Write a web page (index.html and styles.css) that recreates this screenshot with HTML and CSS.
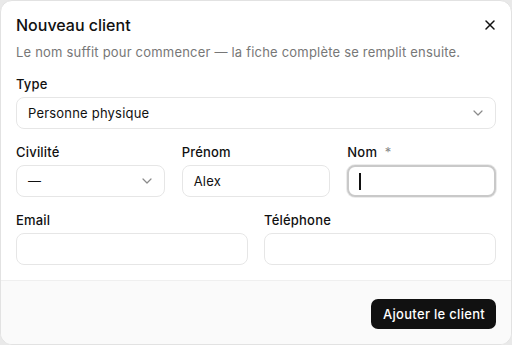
FILE: index.html
```html
<!DOCTYPE html>
<html lang="fr">
<head>
    <meta charset="UTF-8">
    <meta name="viewport" content="width=device-width, initial-scale=1.0">
    <title>Nouveau client</title>
    <link rel="stylesheet" href="styles.css">
</head>
<body>
    <div class="dialog">
        <div class="dialog-body">
            <div class="dialog-header">
                <h2 class="title">Nouveau client</h2>
                <button class="close" aria-label="Fermer">
                    <svg width="12" height="12" viewBox="0 0 12 12"><path d="M2 2L10 10M10 2L2 10" stroke="#111" stroke-width="1.5" stroke-linecap="round"/></svg>
                </button>
            </div>
            <p class="subtitle">Le nom suffit pour commencer — la fiche complète se remplit ensuite.</p>

            <div class="form">
                <div class="field">
                    <label>Type</label>
                    <div class="control select">
                        <span>Personne physique</span>
                        <svg class="chevron" width="10" height="6" viewBox="0 0 10 6"><path d="M1 1L5 5L9 1" fill="none" stroke="#8a8a8a" stroke-width="1.2" stroke-linecap="round" stroke-linejoin="round"/></svg>
                    </div>
                </div>

                <div class="row three">
                    <div class="field">
                        <label>Civilité</label>
                        <div class="control select">
                            <span>—</span>
                            <svg class="chevron" width="10" height="6" viewBox="0 0 10 6"><path d="M1 1L5 5L9 1" fill="none" stroke="#8a8a8a" stroke-width="1.2" stroke-linecap="round" stroke-linejoin="round"/></svg>
                        </div>
                    </div>
                    <div class="field">
                        <label>Prénom</label>
                        <div class="control"><span>Alex</span></div>
                    </div>
                    <div class="field">
                        <label>Nom <span class="req">*</span></label>
                        <div class="control focused"><span class="caret"></span></div>
                    </div>
                </div>

                <div class="row two">
                    <div class="field">
                        <label>Email</label>
                        <div class="control"></div>
                    </div>
                    <div class="field">
                        <label>Téléphone</label>
                        <div class="control"></div>
                    </div>
                </div>
            </div>
        </div>
        <div class="dialog-footer">
            <button class="primary">Ajouter le client</button>
        </div>
    </div>
</body>
</html>
```
FILE: styles.css
```css
* {
    box-sizing: border-box;
}

body {
    margin: 0;
    background-color: #e9e9e9;
    font-family: Inter, "Noto Sans", sans-serif;
    color: #111;
}

.dialog {
    width: 512px;
    height: 345px;
    background-color: #fff;
    border: 1px solid #e2e2e2;
    border-radius: 12px;
    overflow: hidden;
    display: flex;
    flex-direction: column;
}

.dialog-body {
    padding: 12px 15px 15px;
}

.dialog-header {
    display: flex;
    justify-content: space-between;
    align-items: center;
}

.title {
    margin: 0;
    font-size: 16px;
    line-height: 24px;
    font-weight: 500;
}

.close {
    border: none;
    background: none;
    padding: 0;
    width: 20px;
    height: 20px;
    display: flex;
    align-items: center;
    justify-content: center;
    margin-right: -4px;
}

.subtitle {
    margin: 5px 0 0;
    font-size: 13px;
    line-height: 20px;
    color: #777;
    letter-spacing: 0.2px;
}

.form {
    margin-top: 12px;
    display: flex;
    flex-direction: column;
    gap: 13px;
}

.field {
    display: flex;
    flex-direction: column;
    gap: 3px;
}

.field label {
    font-size: 13px;
    line-height: 20px;
    font-weight: 500;
    letter-spacing: 0.2px;
}

.req {
    color: #888;
    font-weight: 400;
    margin-left: 4px;
}

.row {
    display: grid;
    gap: 16px;
}

.row.three {
    grid-template-columns: repeat(3, 1fr);
    gap: 17px;
}

.row.two {
    grid-template-columns: repeat(2, 1fr);
}

.control {
    height: 32px;
    border: 1px solid #e6e6e6;
    border-radius: 8px;
    background-color: #fff;
    display: flex;
    align-items: center;
    justify-content: space-between;
    padding: 0 12px 0 11px;
    font-size: 13px;
    letter-spacing: 0.2px;
}

.control.focused {
    border: 2px solid #c9c9c9;
    box-shadow: 0 0 0 1px #ececec;
    padding-left: 10px;
}

.caret {
    width: 1.5px;
    height: 17px;
    background-color: #111;
}

.dialog-footer {
    flex: 1;
    background-color: #fafafa;
    border-top: 1px solid #efefef;
    display: flex;
    justify-content: flex-end;
    align-items: flex-start;
    padding: 18px 15px 0;
}

.primary {
    background-color: #111;
    color: #fff;
    border: none;
    border-radius: 7px;
    height: 30px;
    padding: 0 11px 0 12px;
    font-family: Inter, "Noto Sans", sans-serif;
    font-size: 13px;
    font-weight: 500;
    letter-spacing: 0.3px;
}
```
